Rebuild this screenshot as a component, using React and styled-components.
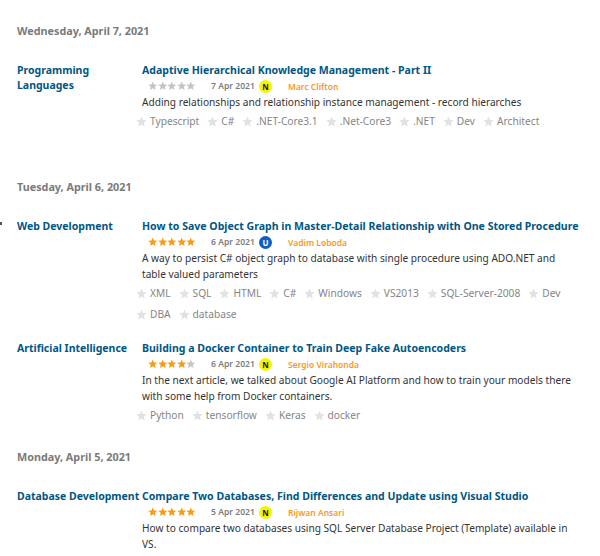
import React from "react";
import styled, { createGlobalStyle } from "styled-components";

const GlobalStyle = createGlobalStyle`
html, body {
    margin: 0;
    padding: 0;
    background: #fff;
}
body {
    font-family: "Noto Sans", "Open Sans", "Liberation Sans", sans-serif;
}
`;

const sections = [
    {
        date: "Wednesday, April 7, 2021",
        gap: 50,
        articles: [
            {
                category: "Programming Languages",
                title: "Adaptive Hierarchical Knowledge Management - Part II",
                rating: 0,
                date: "7 Apr 2021",
                badge: "N",
                author: "Marc Clifton",
                desc: "Adding relationships and relationship instance management - record hierarches",
                tags: ["Typescript", "C#", ".NET-Core3.1", ".Net-Core3", ".NET", "Dev", "Architect"],
            },
        ],
    },
    {
        date: "Tuesday, April 6, 2021",
        gap: 26,
        articles: [
            {
                category: "Web Development",
                title: "How to Save Object Graph in Master-Detail Relationship with One Stored Procedure",
                rating: 5,
                date: "6 Apr 2021",
                badge: "U",
                author: "Vadim Loboda",
                desc: "A way to persist C# object graph to database with single procedure using ADO.NET and table valued parameters",
                tags: ["XML", "SQL", "HTML", "C#", "Windows", "VS2013", "SQL-Server-2008", "Dev", "DBA", "database"],
            },
            {
                category: "Artificial Intelligence",
                title: "Building a Docker Container to Train Deep Fake Autoencoders",
                rating: 4,
                date: "6 Apr 2021",
                badge: "N",
                author: "Sergio Virahonda",
                desc: "In the next article, we talked about Google AI Platform and how to train your models there with some help from Docker containers.",
                tags: ["Python", "tensorflow", "Keras", "docker"],
            },
        ],
    },
    {
        date: "Monday, April 5, 2021",
        gap: 0,
        articles: [
            {
                category: "Database Development",
                title: "Compare Two Databases, Find Differences and Update using Visual Studio",
                rating: 5,
                date: "5 Apr 2021",
                badge: "N",
                author: "Rijwan Ansari",
                desc: "How to compare two databases using SQL Server Database Project (Template) available in VS.",
                tags: [],
            },
        ],
    },
];

const Star = ({ color, size }) => (
    <svg width={size} height={size} viewBox="0 0 20 20">
        <polygon
            fill={color}
            points="10,1 12.6,7.2 19.5,7.8 14.3,12.2 15.9,19 10,15.4 4.1,19 5.7,12.2 0.5,7.8 7.4,7.2"
        />
    </svg>
);

const Page = styled.div`
    width: 600px;
    height: 556px;
    overflow: hidden;
    box-sizing: border-box;
    padding: 23px 0 0 17px;
    position: relative;
`;

const Section = styled.section`
    margin-bottom: ${(p) => p.$gap}px;
`;

const DateHeading = styled.h3`
    margin: 0 0 23px;
    font-size: 10.8px;
    line-height: 16px;
    font-weight: 700;
    color: #7a7a7a;
`;

const Article = styled.article`
    display: grid;
    grid-template-columns: 125px 1fr;
    margin-bottom: 18px;
`;

const Category = styled.div`
    padding-top: 0.5px;
    font-size: 10.5px;
    line-height: 15.5px;
    font-weight: 700;
    color: #005782;
    white-space: ${(p) => (p.$nowrap ? "nowrap" : "normal")};
    width: 100px;
`;

const Body = styled.div`
    min-width: 0;
`;

const Title = styled.div`
    font-size: 10.56px;
    line-height: 16px;
    font-weight: 700;
    color: #005782;
    white-space: nowrap;
`;

const Meta = styled.div`
    display: grid;
    grid-template-columns: 63px 48px 29px auto;
    align-items: center;
    height: 16px;
    padding-left: 6px;
`;

const Stars = styled.div`
    display: flex;
`;

const MetaDate = styled.span`
    font-size: 8.6px;
    font-weight: 600;
    color: #7d7d7d;
    white-space: nowrap;
`;

const Badge = styled.span`
    width: 13px;
    height: 13px;
    border-radius: 50%;
    display: flex;
    align-items: center;
    justify-content: center;
    font-size: 8px;
    font-weight: 700;
    background: ${(p) => (p.$kind === "U" ? "#0b5fc4" : "#f5f500")};
    color: ${(p) => (p.$kind === "U" ? "#fff" : "#111")};
`;

const Author = styled.span`
    font-size: 8.5px;
    font-weight: 600;
    color: #f79a1e;
    white-space: nowrap;
`;

const Desc = styled.p`
    margin: 0;
    font-size: 10.15px;
    line-height: 16px;
    color: #333;
    width: 437px;
`;

const Tags = styled.div`
    display: flex;
    flex-wrap: wrap;
    margin: 3px 0 0 -6px;
    width: 450px;
    row-gap: 5px;
    column-gap: 8px;
`;

const Tag = styled.span`
    display: inline-flex;
    align-items: center;
    gap: 3px;
    height: 16px;
    font-size: 10.2px;
    color: #858585;
`;

const Tick = styled.span`
    position: absolute;
    left: 0;
    top: 222px;
    width: 2px;
    height: 3px;
    background: #555;
`;

export default function App() {
    return (
        <Page>
            <GlobalStyle />
            <Tick />
            {sections.map((section) => (
                <Section key={section.date} $gap={section.gap}>
                    <DateHeading>{section.date}</DateHeading>
                    {section.articles.map((a) => (
                        <Article key={a.title}>
                            <Category $nowrap={a.category !== "Programming Languages"}>{a.category}</Category>
                            <Body>
                                <Title>{a.title}</Title>
                                <Meta>
                                    <Stars>
                                        {[1, 2, 3, 4, 5].map((n) => (
                                            <Star key={n} size={9.5} color={n <= a.rating ? "#fa9a14" : "#c4c4c4"} />
                                        ))}
                                    </Stars>
                                    <MetaDate>{a.date}</MetaDate>
                                    <Badge $kind={a.badge}>{a.badge}</Badge>
                                    <Author>{a.author}</Author>
                                </Meta>
                                <Desc>{a.desc}</Desc>
                                {a.tags.length > 0 && (
                                    <Tags>
                                        {a.tags.map((t) => (
                                            <Tag key={t}>
                                                <Star size={11} color="#e2e2e2" />
                                                {t}
                                            </Tag>
                                        ))}
                                    </Tags>
                                )}
                            </Body>
                        </Article>
                    ))}
                </Section>
            ))}
        </Page>
    );
}
